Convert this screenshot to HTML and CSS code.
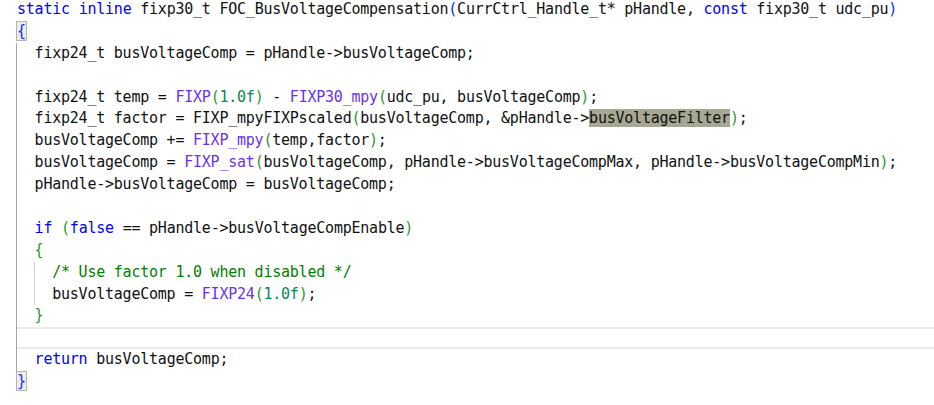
FILE: index.html
```html
<!DOCTYPE html>
<html lang="en">
  <head>
    <meta charset="UTF-8" />
    <meta name="viewport" content="width=device-width, initial-scale=1.0" />
    <title>FOC_BusVoltageCompensation</title>
    <link rel="stylesheet" href="styles.css">
  </head>
  <body>
    <div class="editor">
      <div class="line"><span class="kw">static</span> <span class="kw">inline</span> fixp30_t FOC_BusVoltageCompensation<span class="b1">(</span>CurrCtrl_Handle_t* pHandle, <span class="kw">const</span> fixp30_t udc_pu<span class="b1">)</span></div>
      <div class="line"><span class="brace b1">{</span></div>

      <div class="block">
        <div class="line">  fixp24_t busVoltageComp = pHandle-&gt;busVoltageComp;</div>
        <div class="line"></div>
        <div class="line">  fixp24_t temp = <span class="mac">FIXP</span><span class="b2">(</span><span class="num">1.0f</span><span class="b2">)</span> - <span class="mac">FIXP30_mpy</span><span class="b2">(</span>udc_pu, busVoltageComp<span class="b2">)</span>;</div>
        <div class="line">  fixp24_t factor = FIXP_mpyFIXPscaled<span class="b2">(</span>busVoltageComp, &amp;pHandle-&gt;<span class="hl">busVoltageFilter</span><span class="b2">)</span>;</div>
        <div class="line">  busVoltageComp += <span class="mac">FIXP_mpy</span><span class="b2">(</span>temp,factor<span class="b2">)</span>;</div>
        <div class="line">  busVoltageComp = <span class="mac">FIXP_sat</span><span class="b2">(</span>busVoltageComp, pHandle-&gt;busVoltageCompMax, pHandle-&gt;busVoltageCompMin<span class="b2">)</span>;</div>
        <div class="line">  pHandle-&gt;busVoltageComp = busVoltageComp;</div>
        <div class="line"></div>
        <div class="line">  <span class="kw">if</span> <span class="b2">(</span><span class="kw">false</span> == pHandle-&gt;busVoltageCompEnable<span class="b2">)</span></div>
        <div class="line">  <span class="b2">{</span></div>

        <div class="block inner">
          <div class="line">  <span class="cmt">/* Use factor 1.0 when disabled */</span></div>
          <div class="line">  busVoltageComp = <span class="mac">FIXP24</span><span class="b2">(</span><span class="num">1.0f</span><span class="b2">)</span>;</div>
        </div>

        <div class="line">  <span class="b2">}</span></div>
        <div class="line current"></div>
        <div class="line">  <span class="kw">return</span> busVoltageComp;</div>
      </div>

      <div class="line"><span class="brace b1">}</span></div>
    </div>
  </body>
</html>
```

FILE: styles.css
```css
* {
  margin: 0;
  padding: 0;
  box-sizing: border-box;
}

body {
  background: #ffffff;
}

.editor {
  margin-top: -1px;
  padding-left: 17px;
  font-family: "DejaVu Sans Mono", "Liberation Mono", monospace;
  font-size: 15px;
  letter-spacing: -0.23px;
  color: #111111;
}

.line {
  height: 21.9px;
  line-height: 21.9px;
  white-space: pre;
}

.block {
  margin-left: -1px;
  border-left: 1px solid #a5a5a5;
}

.block.inner {
  margin-left: 16.6px;
  border-left-color: #d4d4d4;
}

.current {
  border-top: 2px solid #eaeaea;
  border-bottom: 2px solid #eaeaea;
}

.kw {
  color: #0000ff;
}

.mac {
  color: #6a32f0;
}

.num {
  color: #098658;
}

.cmt {
  color: #008000;
}

.b1 {
  color: #0431fa;
}

.b2 {
  color: #319331;
}

.hl {
  background: #a7a893;
}

.brace {
  margin: 0 -1px;
  border: 1px solid #b4b4b4;
  background: #ececec;
}
```
